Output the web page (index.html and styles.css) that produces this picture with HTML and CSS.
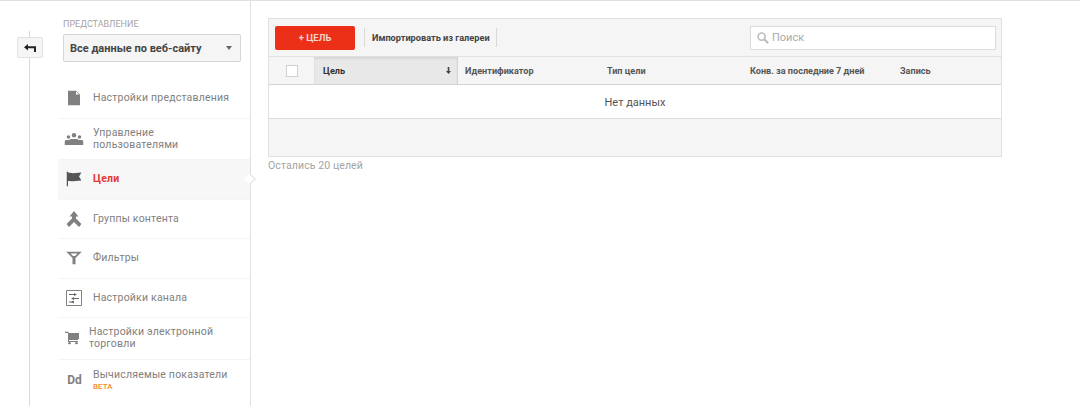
FILE: index.html
```html
<!DOCTYPE html>
<html lang="ru">
<head>
    <meta charset="UTF-8">
    <title>Цели</title>
    <link rel="stylesheet" href="styles.css">
</head>
<body>
    <div class="page">
        <!-- Back rail -->
        <div class="rail">
            <button class="back-button">
                <svg width="12" height="8" viewBox="0 0 12 8"><path d="M4 0v2.2h8V8H10V4.2H4v2.3L0 3.2z" fill="#222"/></svg>
            </button>
        </div>

        <!-- Sidebar -->
        <aside class="sidebar">
            <div class="view-label">ПРЕДСТАВЛЕНИЕ</div>
            <div class="view-select">
                <span>Все данные по веб-сайту</span>
                <span class="caret"></span>
            </div>

            <nav class="nav">
                <a class="nav-item">
                    <svg class="nav-icon" width="12" height="15" viewBox="0 0 12 15"><path d="M0 0h8l4 4v11H0z" fill="#808080"/><path d="M8 .8V4h3.2z" fill="#fff"/></svg>
                    <span class="nav-text">Настройки представления</span>
                </a>
                <a class="nav-item two-line">
                    <svg class="nav-icon" width="19" height="12" viewBox="0 0 19 12"><circle cx="4" cy="4" r="1.8" fill="#808080"/><circle cx="9.5" cy="2.2" r="2.2" fill="#808080"/><circle cx="15" cy="4" r="1.8" fill="#808080"/><path d="M0 12V8.500q0-1.500 2-1.500h3l1-1h7l1 1h3q2 0 2 1.500V12z" fill="#808080"/></svg>
                    <span class="nav-text">Управление<br>пользователями</span>
                </a>
                <a class="nav-item active">
                    <svg class="nav-icon" width="15" height="15" viewBox="0 0 15 15"><path d="M0 0h1.500v15H0z" fill="#555"/><path d="M1.500 1l5 .8L15 1l-2.500 4L15 9l-8.500.8-5-.3z" fill="#555"/></svg>
                    <span class="nav-text">Цели</span>
                </a>
                <a class="nav-item">
                    <svg class="nav-icon" width="15" height="16" viewBox="0 0 15 16"><path d="M7.500 0L12 5.500H9.500V7.500L15 13l-2.500 3-5-5-5 5L0 13l5.500-5.500V5.500H3z" fill="#808080"/></svg>
                    <span class="nav-text">Группы контента</span>
                </a>
                <a class="nav-item">
                    <svg class="nav-icon" width="16" height="13" viewBox="0 0 16 13"><path d="M0 0h16l-6.500 6.500V13h-3V6.500z" fill="#808080"/><path d="M4.500 2h7L9 4.500H7z" fill="#fff"/></svg>
                    <span class="nav-text">Фильтры</span>
                </a>
                <a class="nav-item">
                    <svg class="nav-icon" width="16" height="16" viewBox="0 0 16 16"><path d="M.5.500h15v15H.5z" fill="none" stroke="#808080"/><path d="M3 4.500h5M8 8.500h5M3 12h5" stroke="#666"/><path d="M8 3l3 1.500L8 6zM8 7L5 8.500 8 10zM8 10.500l-3 1.500 3 1.500z" fill="#666"/></svg>
                    <span class="nav-text">Настройки канала</span>
                </a>
                <a class="nav-item two-line shop">
                    <svg class="nav-icon" width="14" height="13" viewBox="0 0 14 13"><path d="M0 0h3l1 1.500h10V7l-1.500 1.500H4V9.500h9v1H3V1.500H0z" fill="#808080"/><path d="M4 1.500h10V7l-1.500 1H4z" fill="#808080"/><circle cx="4.500" cy="11.700" r="1.300" fill="#808080"/><circle cx="11.500" cy="11.700" r="1.300" fill="#808080"/></svg>
                    <span class="nav-text">Настройки электронной<br>торговли</span>
                </a>
                <a class="nav-item two-line">
                    <span class="nav-icon dd">Dd</span>
                    <span class="nav-text">Вычисляемые показатели<span class="beta">BETA</span></span>
                </a>
            </nav>
        </aside>

        <!-- Goals table -->
        <main class="content">
            <div class="goals">
                <div class="toolbar">
                    <button class="add-button">+ ЦЕЛЬ</button>
                    <div class="import-link">Импортировать из галереи</div>
                    <div class="search">
                        <svg width="12" height="12" viewBox="0 0 12 12"><circle cx="4.600" cy="4.600" r="3.600" fill="none" stroke="#bbb" stroke-width="1.500"/><path d="M7.500 7.500L11.200 11.200" stroke="#bbb" stroke-width="2"/></svg>
                        <span>Поиск</span>
                    </div>
                </div>
                <div class="table-head">
                    <div class="col-check"><span class="checkbox"></span></div>
                    <div class="col-name">
                        Цель
                        <svg class="sort-arrow" width="5" height="7" viewBox="0 0 5 7"><path d="M1.700 0h1.600v4H5L2.500 7 0 4h1.700z" fill="#444"/></svg>
                    </div>
                    <div class="col-id">Идентификатор</div>
                    <div class="col-type">Тип цели</div>
                    <div class="col-conv">Конв. за последние 7 дней</div>
                    <div class="col-rec">Запись</div>
                </div>
                <div class="empty-row">Нет данных</div>
                <div class="table-foot"></div>
            </div>
            <p class="remaining">Остались 20 целей</p>
        </main>
    </div>
</body>
</html>
```

FILE: styles.css
```css
body {
    margin: 0;
    font-family: Roboto, "Liberation Sans", sans-serif;
    background-color: #fff;
    color: #808080;
}

.page {
    display: flex;
    height: 405px;
    border-top: 1px solid #e0e0e0;
    overflow: hidden;
}

/* Back rail */
.rail {
    position: relative;
    width: 58px;
    flex-shrink: 0;
}

.rail::before {
    content: "";
    position: absolute;
    top: 30px;
    bottom: 0;
    left: 29px;
    width: 1px;
    background-color: #d9d9d9;
}

.back-button {
    position: absolute;
    top: 36px;
    left: 17px;
    width: 26px;
    height: 21px;
    padding: 0;
    display: flex;
    align-items: center;
    justify-content: center;
    background-color: #f5f5f5;
    border: 1px solid #e2e2e2;
    border-radius: 2px;
}

/* Sidebar */
.sidebar {
    width: 192px;
    flex-shrink: 0;
    border-right: 1px solid #e0e0e0;
    position: relative;
}

.view-label {
    margin: 18px 0 0 5px;
    font-size: 9px;
    line-height: 11px;
    color: #a3a3a3;
}

.view-select {
    display: flex;
    align-items: center;
    justify-content: space-between;
    box-sizing: border-box;
    width: 178px;
    height: 28px;
    margin: 4px 0 0 5px;
    padding: 0 8px 0 6px;
    font-size: 11px;
    font-weight: 700;
    color: #444;
    background-color: #f5f5f5;
    border: 1px solid #d6d6d6;
    border-radius: 2px;
}

.caret {
    border-left: 3.5px solid transparent;
    border-right: 3.5px solid transparent;
    border-top: 4px solid #666;
}

.nav {
    margin-top: 17px;
}

.nav-item {
    display: flex;
    align-items: center;
    box-sizing: border-box;
    height: 39.5px;
    padding-left: 35px;
    position: relative;
    font-size: 10.5px;
    line-height: 12px;
    letter-spacing: 0.2px;
    border-bottom: 1px solid #f4f4f4;
}

.nav-item.two-line {
    height: 41.5px;
}

.nav-item.active {
    font-weight: 700;
    color: #e53935;
    background-color: #f7f7f7;
}

.nav-item.active::after {
    content: "";
    position: absolute;
    top: 15px;
    right: -4px;
    width: 7px;
    height: 7px;
    background-color: #fff;
    border-top: 1px solid #e0e0e0;
    border-right: 1px solid #e0e0e0;
    transform: rotate(45deg);
}

.nav-item.shop {
    padding-left: 31px;
}

.nav-item:last-child {
    border-bottom: none;
}

.nav-icon {
    position: absolute;
    left: 16px;
    top: 50%;
    transform: translate(-50%, -50%);
}

.shop .nav-icon {
    left: 14px;
}

.dd {
    left: 16.5px;
    font-size: 12px;
    font-weight: 700;
    color: #808080;
    letter-spacing: 0;
}

.beta {
    display: block;
    margin-top: 1px;
    font-size: 8px;
    font-weight: 500;
    line-height: 10px;
    color: #f58a1f;
    letter-spacing: 0;
}

/* Goals table */
.content {
    flex: 1;
    padding: 17px 0 0 17px;
}

.goals {
    box-sizing: border-box;
    width: 734px;
    border: 1px solid #e0e0e0;
    background-color: #f5f5f5;
}

.toolbar {
    display: flex;
    align-items: center;
    height: 37px;
    padding-left: 6px;
}

.add-button {
    width: 80px;
    height: 24px;
    font-family: inherit;
    font-size: 9.5px;
    font-weight: 700;
    color: #f5d5cc;
    background-color: #ec2f17;
    border: none;
    border-radius: 2px;
}

.import-link {
    margin-left: 9px;
    height: 19px;
    padding: 0 6px 0 7px;
    font-size: 9.2px;
    font-weight: 700;
    line-height: 19px;
    color: #444;
    border-left: 1px solid #d9d9d9;
    border-right: 1px solid #d9d9d9;
}

.search {
    display: flex;
    align-items: center;
    gap: 3px;
    box-sizing: border-box;
    width: 246px;
    height: 24px;
    margin-left: auto;
    margin-right: 5px;
    padding-left: 6px;
    font-size: 11px;
    color: #aaa;
    background-color: #fff;
    border: 1px solid #dcdcdc;
}

.table-head {
    display: flex;
    box-sizing: border-box;
    height: 29px;
    font-size: 9.1px;
    font-weight: 700;
    line-height: 28px;
    color: #555;
    border-top: 1px solid #e0e0e0;
    border-bottom: 1px solid #d4d4d4;
}

.col-check {
    width: 45px;
    display: flex;
    align-items: center;
    justify-content: center;
}

.checkbox {
    width: 10px;
    height: 10px;
    background-color: #fff;
    border: 1px solid #d0d0d0;
}

.col-name {
    display: flex;
    align-items: center;
    justify-content: space-between;
    box-sizing: border-box;
    width: 144px;
    padding: 0 6px 0 9px;
    color: #333;
    background-color: #e8e8e8;
    border-right: 1px solid #d4d4d4;
    box-shadow: inset 0 2px 2px rgba(0,0,0,0.08);
}

.col-id {
    width: 149px;
    padding-left: 7px;
    box-sizing: border-box;
}

.col-type {
    width: 143px;
}

.col-conv {
    width: 150px;
}

.empty-row {
    box-sizing: border-box;
    height: 34px;
    padding-top: 1px;
    font-size: 11px;
    line-height: 34px;
    text-align: center;
    color: #555;
    background-color: #fff;
    border-bottom: 1px solid #dcdcdc;
}

.table-foot {
    height: 37px;
}

.remaining {
    margin: 2px 0 0;
    font-size: 10.5px;
    line-height: 14px;
    color: #a3a3a3;
    letter-spacing: 0.1px;
}
```
